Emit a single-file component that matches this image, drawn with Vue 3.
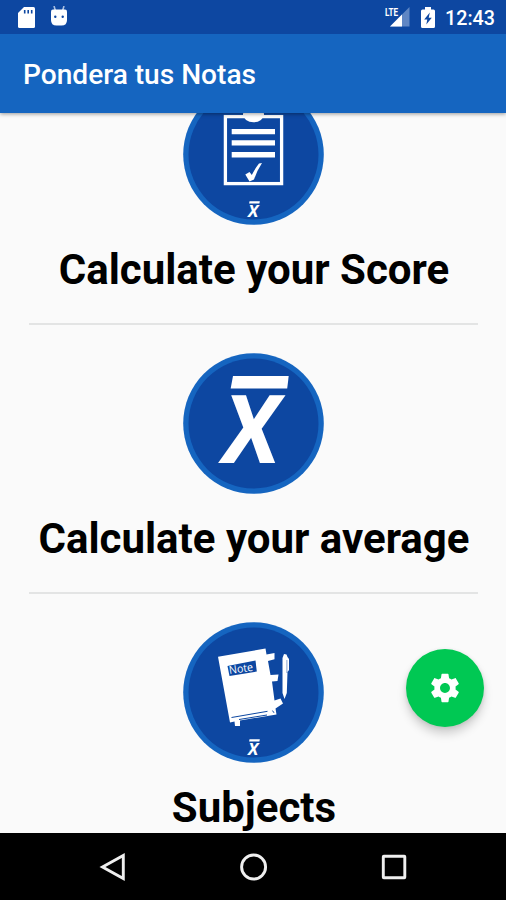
<script setup>
const items = [
  { id: 'score', label: 'Calculate your Score' },
  { id: 'average', label: 'Calculate your average' },
  { id: 'subjects', label: 'Subjects' },
]
</script>

<template>
  <div class="screen">
    <header class="top">
      <div class="status">
        <svg class="sd" viewBox="0 0 17 21">
          <path d="M6 0H15.500Q17 0 17 1.500V19.500Q17 21 15.500 21H1.500Q0 21 0 19.500V6Z" fill="#fff" />
          <path d="M6.700 3V6.500M10.200 3V6.500M13.700 3V6.500" stroke="#0d47a1" stroke-width="1.600" />
        </svg>
        <svg class="droid" viewBox="0 0 18 20">
          <path d="M4 0L5.500 5M14 0L12.500 5" stroke="#a9c0e2" stroke-width="1.600" />
          <path d="M1 5.500Q1 3.500 3 3.500H15Q17 3.500 17 5.500V14Q17 19.500 11.500 19.500H6.500Q1 19.500 1 14Z" fill="#fff" />
          <circle cx="5.300" cy="10.700" r="1.200" fill="#0d47a1" />
          <circle cx="12.700" cy="10.700" r="1.200" fill="#0d47a1" />
        </svg>
        <span class="grow"></span>
        <svg class="signal" viewBox="0 0 26 22">
          <text x="1" y="9.500" class="lte" textLength="13" lengthAdjust="spacingAndGlyphs">LTE</text>
          <path d="M25.500 1V20.500H6Z" fill="#5f86c4" />
          <path d="M18 8.500V20.500H6Z" fill="#fff" />
        </svg>
        <svg class="battery" viewBox="0 0 14 21">
          <path d="M4 0H10V2.500H12.500Q14 2.500 14 4V19.500Q14 21 12.500 21H1.500Q0 21 0 19.500V4Q0 2.500 1.500 2.500H4Z" fill="#fff" />
          <path d="M8.800 5.500L3.200 12.500H6.300L5.300 17.500L10.800 10.700H7.700Z" fill="#0d47a1" />
        </svg>
        <span class="clock">12:43</span>
      </div>
      <h1 class="title">Pondera tus Notas</h1>
    </header>

    <main class="content">
      <section v-for="item in items" :key="item.id" class="item">
        <svg class="badge" viewBox="0 0 141 141">
          <circle cx="70.500" cy="70.500" r="70.300" fill="#1565c0" />
          <circle cx="70.500" cy="70.500" r="65" fill="#0d47a1" />

          <g v-if="item.id === 'score'">
            <rect x="42.400" y="32.600" width="56.200" height="67" fill="none" stroke="#fff" stroke-width="3.300" />
            <ellipse cx="70.500" cy="30.500" rx="10.500" ry="7.700" fill="#fff" />
            <path d="M48.700 47.600H92M48.700 58.900H92M48.700 70.800H92" stroke="#fff" stroke-width="5.400" />
            <path d="M62.300 90.500L66.500 88L68.800 91Q72 84.500 76 79.500L79 79Q74 86.500 71 95.500L66.500 97.500Z" fill="#fff" />
          </g>

          <g v-else-if="item.id === 'average'" fill="#fff">
            <path d="M50 23H105.700L104.200 35.500H47.700Z" />
            <text x="0" y="0" class="big-x" transform="translate(40.500 109.500) skewX(2)" textLength="57" lengthAdjust="spacingAndGlyphs">X</text>
          </g>

          <g v-else>
            <path d="M35 34.700L82.500 26.500L83.500 32.500L91.500 31V37.300L85 39L87.500 53L95.500 52.500L94.500 59L89 59.500L91.500 78.500L97.500 76.500L100 81.500L92.500 86.500L93.500 92.500L57 98.500V104H52L51.500 99.500L47 100.500Z" fill="#fff" />
            <path d="M48.500 95.500L84.500 89.300M89.500 88.600L91 90.800M56 97.500L84 93" stroke="#0d47a1" stroke-width="1" fill="none" />
            <path d="M44.500 44L72.500 38.500L73.800 49.500L46.500 54Z" fill="#0d47a1" />
            <text x="46.500" y="52" class="note" transform="rotate(-8 47 52)" textLength="24" lengthAdjust="spacingAndGlyphs">Note</text>
            <path d="M101 32L103.500 32.500L104.500 35L106 37V48L104.500 50L103.800 71L101.500 77L99.500 71V36Z" fill="#fff" />
            <path d="M103.900 38V51" stroke="#0d47a1" stroke-width=".5" />
          </g>

          <g v-if="item.id !== 'average'" fill="#fff">
            <path d="M66.500 117.300H76.800L76.400 119.500H66.100Z" />
            <text x="65" y="132.800" class="small-x" textLength="10.300" lengthAdjust="spacingAndGlyphs">X</text>
          </g>
        </svg>
        <h2 class="label">{{ item.label }}</h2>
      </section>
    </main>

    <button class="fab" aria-label="Settings">
      <svg viewBox="0 0 24 24">
        <path fill="#fff" d="M19.430 12.980c.04-.32.07-.64.07-.98s-.03-.66-.07-.98l2.110-1.650c.19-.15.24-.42.12-.64l-2-3.460c-.12-.22-.39-.3-.61-.22l-2.490 1c-.52-.4-1.080-.73-1.690-.98l-.38-2.650C14.460 2.180 14.250 2 14 2h-4c-.25 0-.46.18-.49.42l-.38 2.650c-.61.25-1.170.59-1.690.98l-2.490-1c-.23-.09-.49 0-.61.22l-2 3.460c-.13.22-.07.49.12.64l2.110 1.650c-.04.32-.07.65-.07.98s.03.66.07.98l-2.110 1.650c-.19.15-.24.42-.12.64l2 3.460c.12.22.39.3.61.22l2.490-1c.52.4 1.080.73 1.690.98l.38 2.650c.03.24.24.42.49.42h4c.25 0 .46-.18.49-.42l.38-2.650c.61-.25 1.170-.59 1.690-.98l2.490 1c.23.09.49 0 .61-.22l2-3.460c.12-.22.07-.49-.12-.64l-2.110-1.650zM12 15.500c-1.930 0-3.500-1.570-3.500-3.500s1.570-3.500 3.500-3.500 3.500 1.570 3.500 3.500-1.570 3.500-3.500 3.500z" />
      </svg>
    </button>

    <nav class="navbar">
      <svg viewBox="0 0 28 28"><path d="M24.300 2.500V25.500L3.500 14Z" /></svg>
      <svg viewBox="0 0 28 28"><circle cx="13.600" cy="14" r="12" /></svg>
      <svg viewBox="0 0 28 28"><rect x="3.300" y="3.300" width="21.500" height="21.500" rx=".5" /></svg>
    </nav>
  </div>
</template>

<style>
body {
  margin: 0;
}
</style>

<style scoped>
.screen {
  position: relative;
  display: flex;
  flex-direction: column;
  width: 506px;
  height: 900px;
  overflow: hidden;
  background: #fafafa;
  font-family: Roboto, "Liberation Sans", sans-serif;
}
.top {
  position: relative;
  z-index: 1;
  flex: none;
  height: 113px;
  background: #1565c0;
  box-shadow: 0 1px 4px rgba(0, 0, 0, 0.4);
}
.status {
  box-sizing: border-box;
  display: flex;
  align-items: center;
  height: 34px;
  padding: 0 11px 0 17.500px;
  background: #0d47a1;
}
.sd {
  width: 17px;
  height: 21px;
}
.droid {
  width: 18px;
  height: 20px;
  margin: 0 0 2px 15.500px;
}
.grow {
  flex: 1;
}
.signal {
  width: 26px;
  height: 22px;
}
.lte {
  font-size: 11px;
  font-weight: 700;
  fill: #fff;
}
.battery {
  width: 14px;
  height: 21px;
  margin: 0 10px 0 11px;
}
.clock {
  color: #fff;
  font-size: 19.700px;
  font-weight: 500;
  line-height: 34px;
  padding-top: 3px;
}
.title {
  margin: 0;
  padding-left: 23px;
  color: #fff;
  font-size: 28.100px;
  font-weight: 500;
  line-height: 82px;
  white-space: nowrap;
}
.content {
  flex: 1;
  min-height: 0;
  overflow: hidden;
}
.item {
  box-sizing: border-box;
  display: flex;
  flex-direction: column;
  align-items: center;
  height: 269.200px;
  margin: 0 28px 0 29px;
}
.item:first-child {
  margin-top: -29.500px;
}
.item + .item::before {
  content: "";
  flex: none;
  width: 100%;
  height: 2.500px;
  margin-top: -30px;
  margin-bottom: 27.500px;
  background: #e3e4e4;
}
.badge {
  flex: none;
  width: 141px;
  height: 141px;
}
.label {
  margin: 20px 0 0;
  padding-left: 1px;
  color: #000;
  font-size: 42px;
  font-weight: 700;
  line-height: 50px;
  white-space: nowrap;
}
.big-x {
  font: italic 700 95px "Open Sans", sans-serif;
}
.small-x {
  font: italic 700 16px "Open Sans", sans-serif;
}
.note {
  font: 11px "Open Sans", sans-serif;
  fill: #fff;
}
.fab {
  position: absolute;
  left: 405.500px;
  top: 648.500px;
  display: flex;
  align-items: center;
  justify-content: center;
  width: 78.500px;
  height: 78.500px;
  padding: 0;
  border: 0;
  border-radius: 50%;
  background: #00c853;
  box-shadow: 0 7px 10px rgba(0, 0, 0, 0.17), 0 1px 4px rgba(0, 0, 0, 0.1);
}
.fab svg {
  width: 34px;
  height: 34px;
}
.navbar {
  position: relative;
  flex: none;
  box-sizing: border-box;
  display: flex;
  justify-content: space-between;
  align-items: center;
  height: 67px;
  padding: 0 98px 0 99px;
  background: #000;
}
.navbar svg {
  width: 28px;
  height: 28px;
  fill: none;
  stroke: #efefef;
  stroke-width: 2.900;
}
</style>
